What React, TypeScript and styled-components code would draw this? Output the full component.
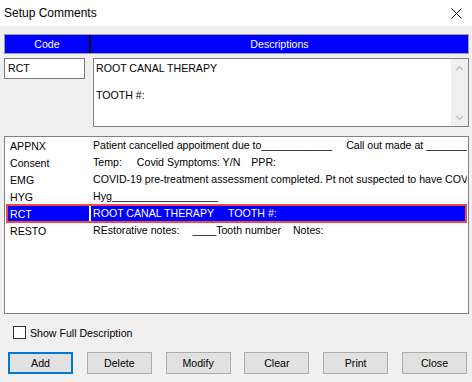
import React from "react";
import styled, { createGlobalStyle } from "styled-components";

const Global = createGlobalStyle`
  html, body { margin: 0; padding: 0; background: #f0f0f0; }
  * { box-sizing: border-box; }
  body { font-family: "Liberation Sans", Arial, sans-serif; font-size: 10.6px; color: #000; }
`;

const Window = styled.div`
  width: 472px;
  height: 382px;
  background: #f0f0f0;
  display: flex;
  flex-direction: column;
  overflow: hidden;
`;

const TitleBar = styled.div`
  height: 26px;
  background: #ffffff;
  display: flex;
  align-items: center;
  justify-content: space-between;
  padding: 0 10px 0 4px;
  font-size: 12px;
`;

const CloseIcon = styled.svg`
  width: 11px;
  height: 11px;
  margin-top: 1px;
`;

const Body = styled.div`
  display: flex;
  flex-direction: column;
  padding: 8px 3px 0 4px;
`;

const Header = styled.div`
  height: 20px;
  border: 1px solid #a0a0a0;
  background: #0000ff;
  color: #ffffff;
  display: grid;
  grid-template-columns: 84px 2px 1fr;
  align-items: center;
`;

const HeaderCell = styled.div`
  text-align: center;
  line-height: 18px;
`;

const HeaderDivider = styled.div`
  height: 18px;
  background: #000000;
`;

const EditRow = styled.div`
  display: flex;
  gap: 8px;
  margin-top: 4px;
  align-items: flex-start;
`;

const CodeInput = styled.div`
  width: 81px;
  height: 21px;
  background: #ffffff;
  border: 1px solid #7a7a7a;
  padding: 3px 0 0 3px;
`;

const TextArea = styled.div`
  flex: 1;
  height: 69px;
  background: #ffffff;
  border: 1px solid #828282;
  display: flex;
`;

const TextContent = styled.div`
  flex: 1;
  padding: 3px 0 0 2px;
  line-height: 13.5px;
  white-space: pre;
`;

const ScrollBar = styled.div`
  width: 17px;
  background: #f0f0f0;
  display: flex;
  flex-direction: column;
  justify-content: space-between;
  align-items: center;
  padding: 6px 0 5px;
`;

const List = styled.div`
  margin-top: 9px;
  height: 178px;
  background: #ffffff;
  border: 1px solid #828282;
  overflow: hidden;
`;

const Row = styled.div<{ $sel?: boolean }>`
  display: grid;
  grid-template-columns: 83px 1fr;
  height: ${(p) => (p.$sel ? "19px" : "17px")};
  margin: ${(p) => (p.$sel ? "-1px 1px" : "0 1px")};
  align-items: center;
  background: ${(p) => (p.$sel ? "#0000ff" : "transparent")};
  color: ${(p) => (p.$sel ? "#ffffff" : "#000000")};
  box-shadow: ${(p) => (p.$sel ? "inset 0 0 0 2px #f04848" : "none")};
  overflow: hidden;
`;

const CodeCell = styled.div`
  padding-left: 4px;
  white-space: nowrap;
`;

const DescCell = styled.div<{ $sel?: boolean }>`
  height: 15px;
  line-height: 15px;
  border-left: 2px solid ${(p) => (p.$sel ? "#ffffff" : "transparent")};
  padding-left: 2px;
  white-space: pre;
  overflow: hidden;
`;

const Gap = styled.span<{ $w: number }>`
  display: inline-block;
  width: ${(p) => p.$w}px;
`;

const CheckRow = styled.label`
  display: flex;
  align-items: center;
  gap: 4px;
  margin: 12px 0 0 9px;
  height: 13px;
`;

const Box = styled.span`
  width: 13px;
  height: 13px;
  border: 1px solid #333333;
  background: #ffffff;
`;

const Buttons = styled.div`
  display: flex;
  justify-content: space-between;
  margin: 13px 2px 0 4px;
`;

const Button = styled.button<{ $focus?: boolean }>`
  width: 65px;
  height: 22px;
  font-family: "Liberation Sans", Arial, sans-serif;
  font-size: 10.6px;
  color: #000;
  background: #e1e1e1;
  border: ${(p) => (p.$focus ? "2px solid #0078d7" : "1px solid #adadad")};
  padding: 0;
`;

const Chevron = ({ up }: { up?: boolean }) => (
  <svg width="9" height="6" viewBox="0 0 9 6">
    <path
      d={up ? "M1 5 L4.5 1.5 L8 5" : "M1 1 L4.5 4.5 L8 1"}
      fill="none"
      stroke="#c0c0c0"
      strokeWidth="1.3"
    />
  </svg>
);

type Seg = string | number;
const rows: { code: string; desc: Seg[]; sel?: boolean }[] = [
  { code: "APPNX", desc: ["Patient cancelled appoitment due to____________", 14, "Call out made at _______"] },
  { code: "Consent", desc: ["Temp:", 15, "Covid Symptoms: Y/N", 11, "PPR:"] },
  { code: "EMG", desc: ["COVID-19 pre-treatment assessment completed. Pt not suspected to have COVID-19"] },
  { code: "HYG", desc: ["Hyg__________________"] },
  { code: "RCT", desc: ["ROOT CANAL THERAPY", 14, "TOOTH #:"], sel: true },
  { code: "RESTO", desc: ["REstorative notes:", 13, "____Tooth number", 12, "Notes:"] },
];

export default function App() {
  return (
    <Window>
      <Global />
      <TitleBar>
        <span>Setup Comments</span>
        <CloseIcon viewBox="0 0 11 11">
          <path d="M0.5 0.5 L10.5 10.5 M10.5 0.5 L0.5 10.5" stroke="#000" strokeWidth="1" />
        </CloseIcon>
      </TitleBar>
      <Body>
        <Header>
          <HeaderCell>Code</HeaderCell>
          <HeaderDivider />
          <HeaderCell>Descriptions</HeaderCell>
        </Header>
        <EditRow>
          <CodeInput>RCT</CodeInput>
          <TextArea>
            <TextContent>{"ROOT CANAL THERAPY\n\nTOOTH #:"}</TextContent>
            <ScrollBar>
              <Chevron up />
              <Chevron />
            </ScrollBar>
          </TextArea>
        </EditRow>
        <List>
          {rows.map((r) => (
            <Row key={r.code} $sel={r.sel}>
              <CodeCell>{r.code}</CodeCell>
              <DescCell $sel={r.sel}>
                {r.desc.map((s, i) =>
                  typeof s === "number" ? <Gap key={i} $w={s} /> : <span key={i}>{s}</span>
                )}
              </DescCell>
            </Row>
          ))}
        </List>
        <CheckRow>
          <Box />
          <span>Show Full Description</span>
        </CheckRow>
        <Buttons>
          <Button $focus>Add</Button>
          <Button>Delete</Button>
          <Button>Modify</Button>
          <Button>Clear</Button>
          <Button>Print</Button>
          <Button>Close</Button>
        </Buttons>
      </Body>
    </Window>
  );
}
